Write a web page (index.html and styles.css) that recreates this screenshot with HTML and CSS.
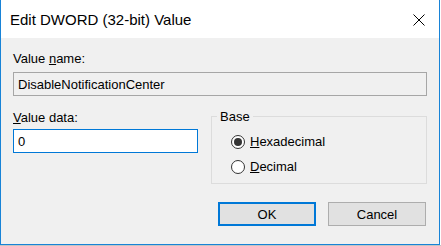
FILE: index.html
```html
<!DOCTYPE html>
<html>
<head>
<meta charset="utf-8">
<link rel="stylesheet" href="styles.css">
</head>
<body>
<div class="window">
  <div class="titlebar">
    <span class="title">Edit DWORD (32-bit) Value</span>
    <svg class="close" width="12" height="12" viewBox="0 0 12 12"><path d="M0.5 0.5 L11.5 11.5 M11.5 0.5 L0.5 11.5" stroke="#000" stroke-width="1" fill="none"/></svg>
  </div>
  <div class="client">
    <div class="label">Value <u>n</u>ame:</div>
    <div class="field readonly">DisableNotificationCenter</div>
    <div class="row">
      <div class="col-left">
        <div class="label"><u>V</u>alue data:</div>
        <div class="field focused">0</div>
      </div>
      <fieldset class="group">
        <legend>Base</legend>
        <div class="radio"><span class="dot checked"></span><span class="rlabel"><u>H</u>exadecimal</span></div>
        <div class="radio"><span class="dot"></span><span class="rlabel"><u>D</u>ecimal</span></div>
      </fieldset>
    </div>
    <div class="buttons">
      <div class="btn default">OK</div>
      <div class="btn">Cancel</div>
    </div>
  </div>
</div>
<div class="shadow"></div>
</body>
</html>
```
FILE: styles.css
```css
html, body {
  margin: 0;
  padding: 0;
  background: #ffffff;
}
body {
  width: 441px;
  height: 246px;
  overflow: hidden;
  font-family: "Liberation Sans", Arial, sans-serif;
  font-size: 13px;
  line-height: 15px;
  color: #000;
}
.window {
  width: 440px;
  height: 245px;
  box-sizing: border-box;
  border: 1px solid #1883d7;
  border-top: none;
  display: flex;
  flex-direction: column;
}
.shadow {
  width: 441px;
  height: 1px;
  background: #c4c4c4;
}
.titlebar {
  height: 38px;
  flex: none;
  background: #fff;
  display: flex;
  align-items: center;
  padding-left: 9px;
}
.title {
  font-size: 15px;
  line-height: 18px;
  margin-top: 1px;
}
.close {
  margin-left: auto;
  margin-right: 14px;
  margin-top: 1px;
}
.client {
  flex: 1;
  background: #f0f0f0;
  padding: 13px 12px 0 12px;
  display: flex;
  flex-direction: column;
}
.label {
  height: 15px;
}
.field {
  box-sizing: border-box;
  height: 24px;
  margin-top: 6px;
  padding: 4px 0 0 4px;
  border: 1px solid #a6a6a6;
  background: #f0f0f0;
}
.field.focused {
  margin-top: 4px;
  border-color: #0078d7;
  background: #fff;
}
.row {
  display: flex;
  margin-top: 14px;
}
.col-left {
  width: 185px;
  flex: none;
}
.group {
  flex: 1;
  margin: -1px 0 0 13px;
  padding: 5px 0 4px 0;
  border: 1px solid #dcdcdc;
  min-width: 0;
}
.group legend {
  margin-left: 5px;
  padding: 0 3px;
  line-height: 15px;
}
.radio {
  height: 25px;
  display: flex;
  align-items: center;
  padding-left: 19px;
}
.dot {
  box-sizing: border-box;
  width: 14px;
  height: 14px;
  border-radius: 50%;
  border: 1px solid #333;
  background: #fff;
  display: flex;
  align-items: center;
  justify-content: center;
}
.dot.checked::after {
  content: "";
  width: 8px;
  height: 8px;
  border-radius: 50%;
  background: #333;
}
.rlabel {
  margin-left: 5px;
}
.buttons {
  display: flex;
  justify-content: flex-end;
  gap: 12px;
  margin-top: 18px;
  margin-right: 1px;
}
.btn {
  box-sizing: border-box;
  width: 98px;
  height: 24px;
  border: 1px solid #adadad;
  background: #e1e1e1;
  display: flex;
  align-items: center;
  justify-content: center;
}
.btn.default {
  border: 2px solid #0078d7;
}
```
